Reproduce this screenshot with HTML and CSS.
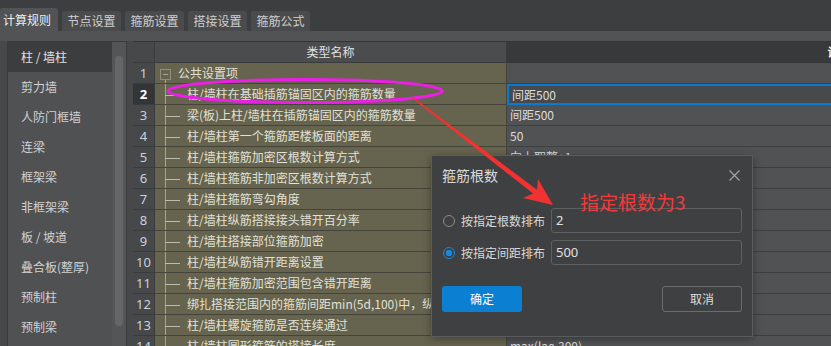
FILE: index.html
```html
<!DOCTYPE html>
<html lang="zh-CN">
<head>
  <meta charset="UTF-8" />
  <title>计算规则</title>
  <link rel="stylesheet" href="styles.css">
</head>
<body>
<div class="app">
  <div class="tabbar">
    <div class="tab active">计算规则</div>
    <div class="tab">节点设置</div>
    <div class="tab">箍筋设置</div>
    <div class="tab">搭接设置</div>
    <div class="tab">箍筋公式</div>
  </div>
  <div class="strip"></div>

  <div class="main">
    <aside class="side">
      <ul class="cats">
        <li class="on">柱 / 墙柱</li>
        <li>剪力墙</li>
        <li>人防门框墙</li>
        <li>连梁</li>
        <li>框架梁</li>
        <li>非框架梁</li>
        <li>板 / 坡道</li>
        <li>叠合板(整厚)</li>
        <li>预制柱</li>
        <li>预制梁</li>
      </ul>
      <div class="track"><div class="thumb"></div></div>
    </aside>

    <div class="sheet">
      <div class="row head">
        <div class="num"></div>
        <div class="name">类型名称</div>
        <div class="val">设置值</div>
      </div>
      <div class="row">
        <div class="num">1</div>
        <div class="name root"><span class="fold">−</span>公共设置项</div>
        <div class="val"></div>
      </div>
      <div class="row">
        <div class="num sel">2</div>
        <div class="name"><span class="branch"></span>柱/墙柱在基础插筋锚固区内的箍筋数量</div>
        <div class="val sel">间距500</div>
      </div>
      <div class="row">
        <div class="num">3</div>
        <div class="name"><span class="branch"></span>梁(板)上柱/墙柱在插筋锚固区内的箍筋数量</div>
        <div class="val">间距500</div>
      </div>
      <div class="row">
        <div class="num">4</div>
        <div class="name"><span class="branch"></span>柱/墙柱第一个箍筋距楼板面的距离</div>
        <div class="val">50</div>
      </div>
      <div class="row">
        <div class="num">5</div>
        <div class="name"><span class="branch"></span>柱/墙柱箍筋加密区根数计算方式</div>
        <div class="val">向上取整+1</div>
      </div>
      <div class="row">
        <div class="num">6</div>
        <div class="name"><span class="branch"></span>柱/墙柱箍筋非加密区根数计算方式</div>
        <div class="val"></div>
      </div>
      <div class="row">
        <div class="num">7</div>
        <div class="name"><span class="branch"></span>柱/墙柱箍筋弯勾角度</div>
        <div class="val"></div>
      </div>
      <div class="row">
        <div class="num">8</div>
        <div class="name"><span class="branch"></span>柱/墙柱纵筋搭接接头错开百分率</div>
        <div class="val"></div>
      </div>
      <div class="row">
        <div class="num">9</div>
        <div class="name"><span class="branch"></span>柱/墙柱搭接部位箍筋加密</div>
        <div class="val"></div>
      </div>
      <div class="row">
        <div class="num">10</div>
        <div class="name"><span class="branch"></span>柱/墙柱纵筋错开距离设置</div>
        <div class="val"></div>
      </div>
      <div class="row">
        <div class="num">11</div>
        <div class="name"><span class="branch"></span>柱/墙柱箍筋加密范围包含错开距离</div>
        <div class="val"></div>
      </div>
      <div class="row">
        <div class="num">12</div>
        <div class="name"><span class="branch"></span>绑扎搭接范围内的箍筋间距min(5d,100)中，纵筋d的取值</div>
        <div class="val"></div>
      </div>
      <div class="row">
        <div class="num">13</div>
        <div class="name"><span class="branch"></span>柱/墙柱螺旋箍筋是否连续通过</div>
        <div class="val"></div>
      </div>
      <div class="row">
        <div class="num">14</div>
        <div class="name"><span class="branch"></span>柱/墙柱圆形箍筋的搭接长度</div>
        <div class="val">max(lae,300)</div>
      </div>
    </div>
  </div>

  <div class="dialog">
    <div class="dlg-head">
      <span>箍筋根数</span>
      <svg class="close" width="11" height="11" viewBox="0 0 11 11">
        <path d="M0.5 0.5 L10.5 10.5 M10.5 0.5 L0.5 10.5" stroke="#a3a4a6" stroke-width="1.2" fill="none"/>
      </svg>
    </div>
    <div class="dlg-body">
      <div class="opt">
        <label><span class="radio"></span>按指定根数排布</label>
        <div class="field">2</div>
      </div>
      <div class="opt">
        <label><span class="radio checked"></span>按指定间距排布</label>
        <div class="field">500</div>
      </div>
      <div class="btns">
        <div class="btn ok">确定</div>
        <div class="btn cancel">取消</div>
      </div>
    </div>
  </div>

  <!-- annotations drawn on the screenshot -->
  <svg class="marks" width="831" height="346" viewBox="0 0 831 346">
    <ellipse cx="305" cy="91" rx="137" ry="11.5" fill="none" stroke="#ec1fe6" stroke-width="3"/>
    <polygon fill="#f03232" points="412.5,98.6 533,193.5 523,198 553,205 538,179 537,189.7 413.5,97.4"/>
  </svg>
  <div class="note">指定根数为3</div>
</div>
</body>
</html>
```

FILE: styles.css
```css
* {
  box-sizing: border-box;
}
body {
  margin: 0;
  width: 831px;
  height: 346px;
  overflow: hidden;
  background: #3d3e40;
  font-family: "Noto Sans CJK SC", "Noto Sans", sans-serif;
  font-size: 12px;
  color: #d6d6d6;
}
.app {
  position: relative;
  width: 831px;
  height: 346px;
  overflow: hidden;
}
.tabbar {
  height: 31px;
  display: flex;
  align-items: flex-end;
  gap: 4px;
  background: #3d3e40;
}
.tab {
  width: 59px;
  height: 20px;
  line-height: 20px;
  text-align: center;
  background: #4a4b4d;
  border-radius: 3px 3px 0 0;
  color: #cfcfcf;
}
.tab.active {
  width: 58px;
  height: 23px;
  line-height: 24px;
  padding-right: 4px;
  background: #525355;
  color: #ededed;
}
.strip {
  height: 10px;
  background: #525355;
}
.main {
  display: flex;
  gap: 6px;
  height: 305px;
  padding-left: 7px;
  background: #47484a;
}
.side {
  width: 120px;
  flex-shrink: 0;
  display: flex;
  background: #505153;
  border: 1px solid #3a3b3d;
  border-bottom: none;
}
.cats {
  list-style: none;
  margin: 0;
  padding: 0;
  width: 104px;
}
.cats li {
  height: 30px;
  line-height: 30px;
  padding-left: 13px;
  color: #d2d2d2;
  white-space: nowrap;
}
.cats li.on {
  background: #3c3d3f;
  color: #e2e2e2;
}
.track {
  flex: 1;
  padding: 14px 3px 0 3px;
  background: #545557;
}
.thumb {
  height: 270px;
  border-radius: 4px;
  background: #656668;
}
.sheet {
  flex: 1;
  overflow: hidden;
  border-top: 1px solid #333436;
}
.row {
  display: flex;
  height: 21px;
}
.num {
  width: 22px;
  flex-shrink: 0;
  text-align: center;
  background: #47484a;
  border-right: 1px solid #3a3b3d;
  border-bottom: 1px solid #3a3b3d;
  font-family: "Noto Sans", sans-serif;
  font-size: 13px;
  line-height: 20px;
  color: #c9d1db;
}
.num.sel {
  background: #343537;
  color: #ffffff;
  font-weight: bold;
}
.name {
  width: 352px;
  flex-shrink: 0;
  white-space: nowrap;
  overflow: hidden;
  line-height: 20px;
  color: #e2e1d8;
  background: linear-gradient(#a3a293, #a3a293) 10px 0 / 1px 100% no-repeat, #66644e;
  border-bottom: 1px solid #45443c;
  border-right: 1px solid #45443c;
}
.name.root {
  background: linear-gradient(#a3a293, #a3a293) 10px 16px / 1px 5px no-repeat, #66644e;
}
.branch {
  display: inline-block;
  width: 15px;
  height: 1px;
  margin: 0 7px 0 10px;
  vertical-align: middle;
  background: #bdbcb0;
}
.fold {
  display: inline-block;
  width: 11px;
  height: 11px;
  margin: 0 7px 0 5px;
  border: 1px solid #8f8e80;
  line-height: 8px;
  text-align: center;
  font-size: 11px;
  color: #b6b5a8;
  vertical-align: middle;
}
.val {
  width: 674px;
  flex-shrink: 0;
  padding-left: 3px;
  line-height: 20px;
  white-space: nowrap;
  color: #dcdcdc;
  background: #515254;
  border-bottom: 1px solid #3e3f41;
}
.val.sel {
  border: 2px solid #0b79d0;
  background: #48494b;
  line-height: 17px;
}
.head .num {
  background: #47484a;
}
.head .name {
  background: #4b4c4e;
  border-color: #3a3b3d;
  text-align: center;
  color: #e0e0e0;
}
.head .val {
  background: #38393b;
  border-color: #333436;
  text-align: center;
  font-weight: bold;
  color: #f2f2f2;
}

/* dialog */
.dialog {
  position: absolute;
  left: 431px;
  top: 155px;
  width: 322px;
  background: #3f4042;
  border: 1px solid #5b5c5e;
  box-shadow: 0 2px 8px rgba(0, 0, 0, 0.35);
}
.dlg-head {
  height: 38px;
  display: flex;
  align-items: center;
  justify-content: space-between;
  padding: 0 12px 0 10px;
  font-size: 14px;
  color: #dcdcdc;
}
.dlg-body {
  padding: 14px 10px 24px 10px;
}
.opt {
  display: grid;
  grid-template-columns: 109px 1fr;
  align-items: center;
  height: 25px;
  margin-bottom: 7px;
}
.opt label {
  display: flex;
  align-items: center;
  padding-left: 1px;
  color: #dadada;
  white-space: nowrap;
}
.radio {
  width: 12px;
  height: 12px;
  margin-right: 6px;
  border-radius: 50%;
  border: 1px solid #8b8c8e;
}
.radio.checked {
  border-color: #1a86dc;
  background: radial-gradient(circle, #1a86dc 0 3px, transparent 3.5px);
}
.field {
  height: 25px;
  padding-left: 4px;
  line-height: 23px;
  border: 1px solid #5f6062;
  border-radius: 3px;
  font-family: "Noto Sans", sans-serif;
  font-size: 13px;
  color: #e0e0e0;
}
.btns {
  display: flex;
  justify-content: space-between;
  margin-top: 21px;
}
.btn {
  width: 80px;
  height: 26px;
  line-height: 24px;
  text-align: center;
  border-radius: 3px;
  border: 1px solid transparent;
}
.btn.ok {
  background: #0b7fd1;
  color: #ffffff;
}
.btn.cancel {
  border-color: #6b6c6e;
  color: #dedede;
}

/* annotations */
.marks {
  position: absolute;
  left: 0;
  top: 0;
  pointer-events: none;
}
.note {
  position: absolute;
  left: 580px;
  top: 190px;
  font-size: 19px;
  line-height: 24px;
  color: #f23a3a;
  white-space: nowrap;
}
```
